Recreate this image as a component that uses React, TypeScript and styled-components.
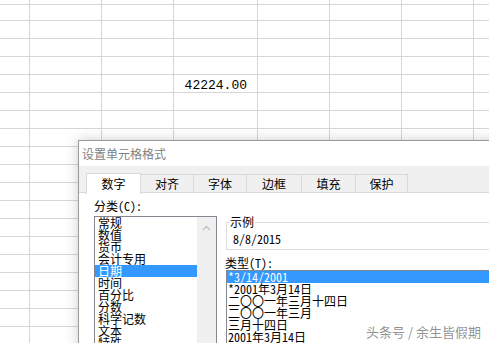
import React from "react";
import styled, { createGlobalStyle } from "styled-components";

const UI_FONT = `"Noto Sans Mono CJK SC", "Noto Sans CJK SC", "Noto Sans", sans-serif`;

const GlobalStyle = createGlobalStyle`
  html, body {
    margin: 0;
    padding: 0;
    background: #fff;
  }
  body {
    font-family: ${UI_FONT};
  }
`;

const COLS = [30, 72, 72, 84, 72, 72, 72, 72];
const ROWS = 20;

const categories = [
  "常规",
  "数值",
  "货币",
  "会计专用",
  "日期",
  "时间",
  "百分比",
  "分数",
  "科学记数",
  "文本",
  "特殊",
];

const types = [
  "*3/14/2001",
  "*2001年3月14日",
  "二〇〇一年三月十四日",
  "二〇〇一年三月",
  "三月十四日",
  "2001年3月14日",
];

const tabs = [
  { label: "数字", w: 55 },
  { label: "对齐", w: 54 },
  { label: "字体", w: 54 },
  { label: "边框", w: 56 },
  { label: "填充", w: 55 },
  { label: "保护", w: 53 },
];

export default function App() {
  return (
    <Screen>
      <GlobalStyle />
      <Sheet>
        {Array.from({ length: ROWS }).map((_, r) =>
          COLS.map((_, c) => (
            <Cell key={`${r}-${c}`}>{r === 5 && c === 3 ? "42224.00" : null}</Cell>
          ))
        )}
      </Sheet>

      <Dialog>
        <TitleBar>设置单元格格式</TitleBar>
        <TabStrip>
          {tabs.map((t, i) => (
            <Tab key={t.label} $active={i === 0} $w={t.w}>
              {t.label}
            </Tab>
          ))}
        </TabStrip>
        <Panel>
          <LeftCol>
            <FieldLabel>分类(C):</FieldLabel>
            <ListBox>
              <Items>
                {categories.map((c) => (
                  <Item key={c} $selected={c === "日期"}>
                    {c}
                  </Item>
                ))}
              </Items>
              <ScrollTrack>
                <svg width="9" height="6" viewBox="0 0 9 6">
                  <path d="M1 5 L4.5 1.5 L8 5" fill="none" stroke="#c2c2c2" strokeWidth="1.3" />
                </svg>
              </ScrollTrack>
            </ListBox>
          </LeftCol>

          <RightCol>
            <SampleBox>
              <legend>示例</legend>
              <SampleValue>8/8/2015</SampleValue>
            </SampleBox>
            <TypeLabel>类型(T):</TypeLabel>
            <TypeList>
              {types.map((t, i) => (
                <TypeItem key={t} $selected={i === 0}>
                  {t}
                </TypeItem>
              ))}
            </TypeList>
          </RightCol>
        </Panel>
      </Dialog>

      <Watermark>头条号 / 余生皆假期</Watermark>
    </Screen>
  );
}

const Screen = styled.div`
  position: relative;
  width: 489px;
  height: 343px;
  overflow: hidden;
  background: #fff;
`;

const Sheet = styled.div`
  display: grid;
  grid-template-columns: ${COLS.map((w) => `${w}px`).join(" ")};
  grid-template-rows: 3px repeat(${ROWS - 1}, 18px);
`;

const Cell = styled.div`
  box-sizing: border-box;
  border-right: 1px solid #d6d6d6;
  border-bottom: 1px solid #d6d6d6;
  padding: 4px 10px 0 0;
  font: 13px/14px "Liberation Mono", monospace;
  color: #000;
  text-align: right;
  white-space: nowrap;
`;

const Dialog = styled.div`
  position: absolute;
  left: 78px;
  top: 140px;
  width: 470px;
  height: 260px;
  background: #fff;
  border: 1px solid #9a9a9a;
  box-shadow: 0 0 12px rgba(0, 0, 0, 0.2);
  display: flex;
  flex-direction: column;
`;

const TitleBar = styled.div`
  height: 25px;
  padding-left: 3px;
  font-size: 12px;
  line-height: 25px;
  color: #7f7f7f;
  background: #fff;
`;

const TabStrip = styled.div`
  height: 26px;
  display: flex;
  align-items: flex-end;
  padding-left: 7px;
  background: #f0f0f0;
  border-bottom: 1px solid #d9d9d9;
`;

const Tab = styled.div<{ $active?: boolean; $w: number }>`
  box-sizing: border-box;
  width: ${(p) => p.$w}px;
  height: ${(p) => (p.$active ? 21 : 19)}px;
  margin-bottom: ${(p) => (p.$active ? -2 : -1)}px;
  & + & {
    margin-left: -1px;
  }
  border: 1px solid #d9d9d9;
  border-bottom: ${(p) => (p.$active ? "none" : "1px solid #d9d9d9")};
  background: ${(p) => (p.$active ? "#fff" : "#f0f0f0")};
  position: relative;
  z-index: ${(p) => (p.$active ? 2 : 1)};
  font-size: 12px;
  line-height: ${(p) => (p.$active ? 19 : 17)}px;
  text-align: center;
  color: #000;
`;

const Panel = styled.div`
  flex: 1;
  display: flex;
  padding: 4px 0 0 15px;
  background: #fff;
`;

const LeftCol = styled.div`
  width: 123px;
  display: flex;
  flex-direction: column;
`;

const FieldLabel = styled.div`
  padding-top: 1px;
  font-size: 12px;
  line-height: 16px;
  color: #000;
  margin-bottom: 2px;
`;

const ListBox = styled.div`
  flex: 1;
  display: flex;
  border: 1px solid #828790;
  background: #fff;
`;

const Items = styled.div`
  flex: 1;
`;

const Item = styled.div<{ $selected?: boolean }>`
  height: 12px;
  padding-left: 3px;
  font-size: 12px;
  line-height: 12px;
  white-space: nowrap;
  color: ${(p) => (p.$selected ? "#fff" : "#000")};
  background: ${(p) => (p.$selected ? "#3399ff" : "transparent")};
`;

const ScrollTrack = styled.div`
  width: 19px;
  background: #f0f0f0;
  display: flex;
  justify-content: center;
  padding-top: 8px;
  box-sizing: border-box;
`;

const RightCol = styled.div`
  flex: 1;
  margin-left: 8px;
  display: flex;
  flex-direction: column;
`;

const SampleBox = styled.fieldset`
  margin: 18px 0 0 1px;
  padding: 0 0 1px 2px;
  border: 1px solid #dcdcdc;
  border-right: none;

  legend {
    padding: 0 1px;
    font-size: 12px;
    line-height: 14px;
    color: #000;
  }
`;

const SampleValue = styled.div`
  padding: 3px 0 0 4px;
  height: 16px;
  font-size: 12px;
  line-height: 14px;
  color: #000;
`;

const TypeLabel = styled.div`
  margin-top: 6px;
  font-size: 12px;
  line-height: 14px;
  color: #000;
`;

const TypeList = styled.div`
  flex: 1;
  margin-left: 1px;
  border: 1px solid #828790;
  border-right: none;
  background: #fff;
`;

const TypeItem = styled.div<{ $selected?: boolean }>`
  height: 12px;
  padding-left: 1px;
  font-size: 12px;
  line-height: 12px;
  white-space: nowrap;
  color: ${(p) => (p.$selected ? "#fff" : "#000")};
  background: ${(p) => (p.$selected ? "#3399ff" : "transparent")};
`;

const Watermark = styled.div`
  position: absolute;
  right: 8px;
  bottom: 3px;
  font-family: "Noto Sans CJK SC", sans-serif;
  font-size: 13px;
  line-height: 16px;
  color: rgba(110, 110, 110, 0.75);
  text-shadow: 0 0 2px #fff, 0 0 1px #fff;
`;
